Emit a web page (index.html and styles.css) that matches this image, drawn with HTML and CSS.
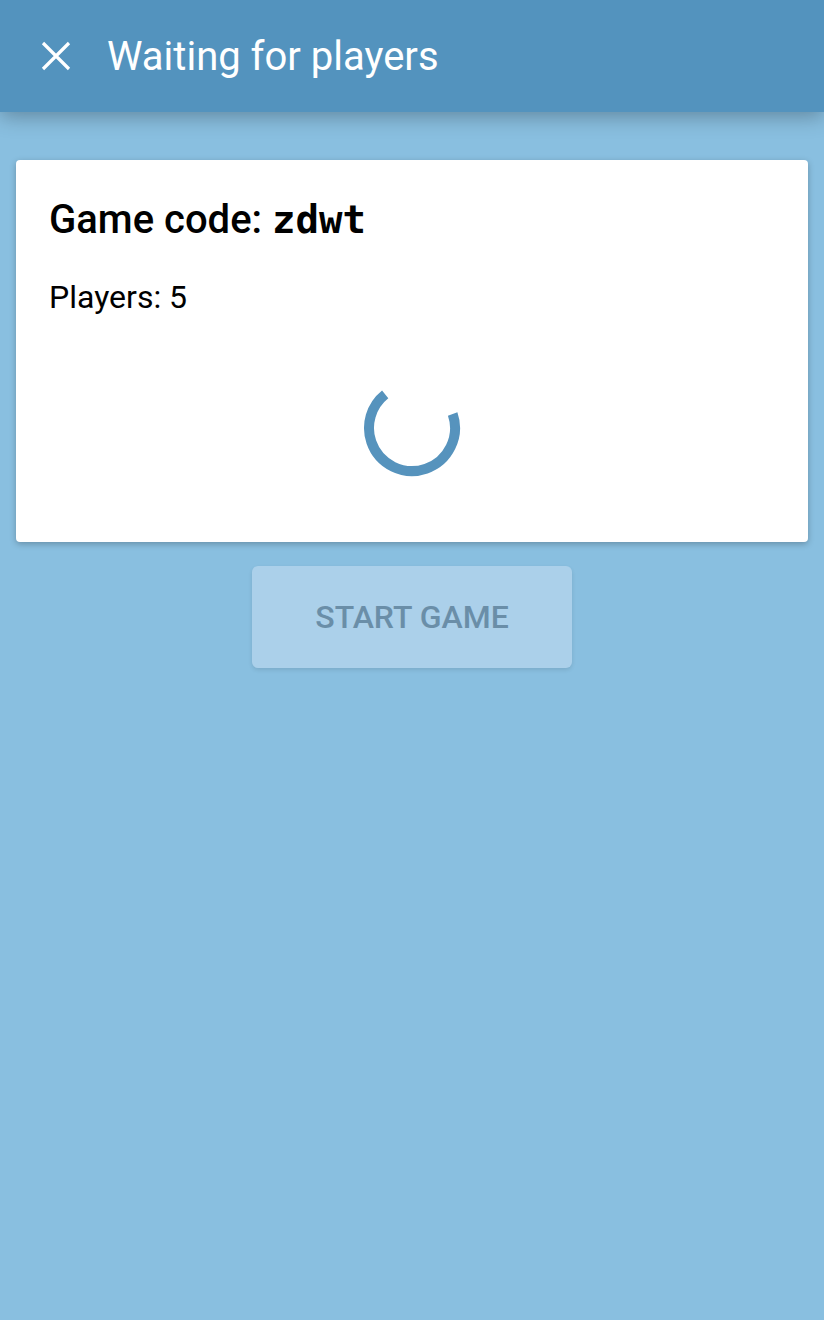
FILE: index.html
```html
<!DOCTYPE html>
<html>
<head>
<meta charset="utf-8">
<link rel="stylesheet" href="styles.css">
</head>
<body>
<header class="appbar">
  <button class="close" aria-label="Close">
    <svg width="32" height="32" viewBox="0 0 32 32"><path d="M3 3 L29 29 M29 3 L3 29" stroke="#fff" stroke-width="3.2" fill="none"/></svg>
  </button>
  <h1 class="title">Waiting for players</h1>
</header>
<main class="content">
  <section class="card">
    <h2 class="code">Game code: <span class="mono">zdwt</span></h2>
    <p class="players">Players: 5</p>
    <div class="spinner-wrap">
      <svg class="spinner" width="100" height="100" viewBox="0 0 100 100">
        <circle cx="50" cy="50" r="43" fill="none" stroke="#5693bd" stroke-width="10" stroke-dasharray="187.6 300" transform="rotate(-19 50 50)"/>
      </svg>
    </div>
  </section>
  <div class="actions">
    <button class="start" disabled>START GAME</button>
  </div>
</main>
</body>
</html>
```
FILE: styles.css
```css
html, body {
  margin: 0;
  padding: 0;
  background: #89bfe0;
  font-family: Roboto, "Noto Sans", sans-serif;
}
.appbar {
  height: 112px;
  background: #5393be;
  display: flex;
  align-items: center;
  padding-left: 40px;
  box-shadow: 0 4px 20px rgba(0,0,0,0.3);
  position: relative;
  z-index: 1;
}
.close {
  background: none;
  border: 0;
  padding: 0;
  width: 32px;
  height: 32px;
  display: flex;
  margin-right: 35px;
}
.title {
  margin: 0;
  color: #fff;
  font-weight: 400;
  font-size: 40px;
}
.content {
  padding: 48px 16px;
}
.card {
  background: #fff;
  border-radius: 4px;
  box-shadow: 0 2px 6px rgba(0,0,0,0.25);
  padding: 36px 33px 0;
  height: 382px;
  box-sizing: border-box;
}
.code {
  margin: 0;
  font-size: 40px;
  font-weight: 500;
  color: #000;
  line-height: 48px;
}
.mono {
  font-family: "DejaVu Sans Mono", monospace;
  font-weight: 700;
  font-size: 39px;
}
.players {
  margin: 34px 0 0;
  font-size: 32px;
  color: #000;
}
.spinner-wrap {
  display: flex;
  justify-content: center;
  margin-top: 62px;
}
.spinner {
  display: block;
}
.actions {
  display: flex;
  justify-content: center;
  margin-top: 24px;
}
.start {
  width: 320px;
  height: 102px;
  border: 0;
  border-radius: 6px;
  background: #abd0ea;
  color: #6a8ea8;
  font-family: Roboto, sans-serif;
  font-size: 32px;
  font-weight: 500;
  box-shadow: 0 2px 4px rgba(0,0,0,0.1);
}
```
